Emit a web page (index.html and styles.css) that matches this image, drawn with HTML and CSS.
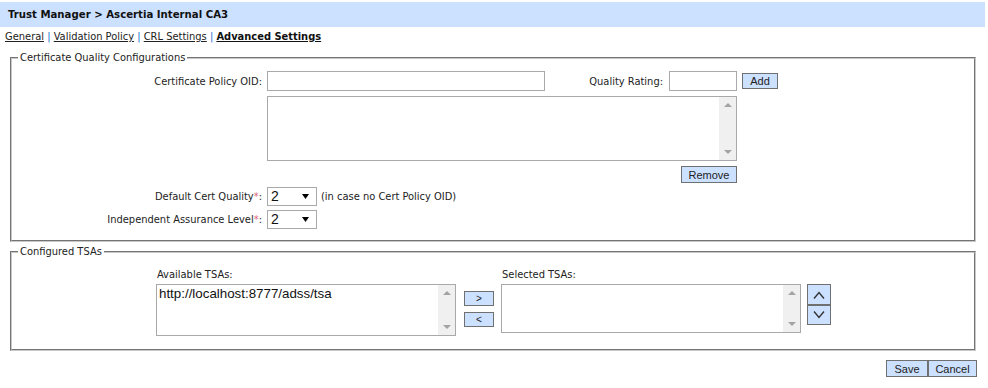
FILE: index.html
```html
<!DOCTYPE html>
<html>
<head>
<meta charset="utf-8">
<link rel="stylesheet" href="styles.css">
</head>
<body>
<div class="header">Trust Manager &gt; Ascertia Internal CA3</div>
<div class="tabs">
  <a class="tab" href="#">General</a> <span class="sep">|</span>
  <a class="tab" href="#">Validation Policy</a> <span class="sep">|</span>
  <a class="tab" href="#">CRL Settings</a> <span class="sep">|</span>
  <a class="tab current" href="#">Advanced Settings</a>
</div>

<fieldset class="box cq">
  <legend>Certificate Quality Configurations</legend>
  <div class="form">
    <label class="lbl">Certificate Policy OID:</label>
    <div class="row1">
      <input class="txt oid" type="text">
      <span class="qlbl">Quality Rating:</span>
      <input class="txt qr" type="text">
      <button class="btn add">Add</button>
    </div>

    <span></span>
    <div class="list oidlist">
      <div class="list-body"></div>
      <div class="sbar"><span class="arr up"></span><span class="arr down"></span></div>
    </div>

    <span></span>
    <div class="remove-row"><button class="btn remove">Remove</button></div>

    <label class="lbl">Default Cert Quality<span class="req">*</span>:</label>
    <div class="selrow">
      <span class="sel"><span class="sv">2</span><svg class="tri" width="9" height="7" viewBox="0 0 9 7"><path d="M1 1h7l-3.5 5z" fill="#000"/></svg></span>
      <span class="note">(in case no Cert Policy OID)</span>
    </div>

    <label class="lbl">Independent Assurance Level<span class="req">*</span>:</label>
    <div class="selrow">
      <span class="sel"><span class="sv">2</span><svg class="tri" width="9" height="7" viewBox="0 0 9 7"><path d="M1 1h7l-3.5 5z" fill="#000"/></svg></span>
    </div>
  </div>
</fieldset>

<fieldset class="box tsa">
  <legend>Configured TSAs</legend>
  <div class="tsa-grid">
    <div class="col">
      <div class="clbl">Available TSAs:</div>
      <div class="list avail">
        <div class="list-body"><div class="item">http://localhost:8777/adss/tsa</div></div>
        <div class="sbar"><span class="arr up"></span><span class="arr down"></span></div>
      </div>
    </div>
    <div class="mover">
      <button class="btn mv">&gt;</button>
      <button class="btn mv">&lt;</button>
    </div>
    <div class="col">
      <div class="clbl">Selected TSAs:</div>
      <div class="list selected">
        <div class="list-body"></div>
        <div class="sbar"><span class="arr up"></span><span class="arr down"></span></div>
      </div>
    </div>
    <div class="order">
      <button class="btn ord"><svg width="12" height="8" viewBox="0 0 12 8"><path d="M1 7.5L6 1.5l5 6" fill="none" stroke="#333" stroke-width="1.4"/></svg></button>
      <button class="btn ord"><svg width="12" height="8" viewBox="0 0 12 8"><path d="M1 0.5L6 6.5l5-6" fill="none" stroke="#333" stroke-width="1.4"/></svg></button>
    </div>
  </div>
</fieldset>

<div class="actions">
  <button class="btn act">Save</button><button class="btn act">Cancel</button>
</div>
</body>
</html>
```
FILE: styles.css
```css
body {
  margin: 0;
  font-family: "DejaVu Sans Condensed", "DejaVu Sans", sans-serif;
  font-stretch: condensed;
  font-size: 11px;
  color: #222;
  background: #fff;
}
.header {
  margin-top: 2px;
  width: 977px;
  height: 25px;
  line-height: 25px;
  padding-left: 8px;
  background: #cce0ff;
  font-weight: bold;
  font-size: 11.3px;
  color: #111;
}
.tabs {
  padding: 3px 5px 0;
  height: 16px;
  font-size: 11px;
}
.tab { color: #222; text-decoration: underline; }
.tab.current { font-weight: bold; color: #111; }
.sep { color: #1a6fd0; }

.box {
  margin: 0 12px 0 10px;
  padding: 0;
  border: 2px groove #c8c8c8;
  min-width: 0;
}
.box legend {
  margin-left: 6px;
  padding: 0 2px;
  font-size: 11px;
  line-height: 13px;
  color: #222;
}
.cq { margin-top: 5px; }
.tsa { margin-top: 3px; }

.form {
  display: grid;
  grid-template-columns: 250px 1fr;
  column-gap: 5px;
  row-gap: 4px;
  align-items: center;
  padding: 7px 0 11px;
}
.lbl { text-align: right; }
.row1 { display: flex; align-items: center; height: 20px; }
.txt {
  box-sizing: border-box;
  height: 20px;
  border: 1px solid #a9a9a9;
  padding: 0 2px;
  margin: 0;
}
.oid { width: 278px; }
.qlbl { width: 118px; text-align: right; margin-right: 6px; }
.qr { width: 68px; }
.btn {
  box-sizing: border-box;
  margin: 0;
  padding: 0;
  background: #cce0ff;
  border: 1px solid #707070;
  font-family: "Liberation Sans", Arial, sans-serif;
  font-size: 11px;
  color: #222;
  cursor: pointer;
}
.add { margin-left: 5px; width: 36px; height: 16px; }

.list {
  box-sizing: border-box;
  display: flex;
  border: 1px solid #a9a9a9;
  background: #fff;
}
.list-body { flex: 1; }
.sbar {
  width: 17px;
  background: #f0f0f0;
  display: flex;
  flex-direction: column;
  justify-content: space-between;
  align-items: center;
  padding: 6px 0;
}
.arr { width: 0; height: 0; border-left: 4px solid transparent; border-right: 4px solid transparent; }
.arr.up { border-bottom: 4px solid #a3a3a3; }
.arr.down { border-top: 4px solid #a3a3a3; }

.oidlist { width: 470px; height: 65px; margin-top: 1px; }
.remove-row { width: 470px; display: flex; justify-content: flex-end; margin-top: 1px; }
.remove { width: 56px; height: 17px; }

.selrow { display: flex; align-items: center; height: 19px; }
.sel {
  box-sizing: border-box;
  position: relative;
  width: 50px;
  height: 19px;
  border: 1px solid #a9a9a9;
  display: inline-block;
  font-family: "Liberation Sans", Arial, sans-serif;
  font-size: 14px;
  line-height: 17px;
  padding-left: 3px;
  color: #111;
}
.tri { position: absolute; right: 6px; top: 5px; }
.note { margin-left: 4px; }
.req { color: #e0607a; }

.tsa-grid {
  display: flex;
  align-items: flex-start;
  padding: 10px 0 13px 144px;
}
.clbl { height: 13px; line-height: 13px; margin-bottom: 3px; padding-left: 1px; }
.avail { width: 300px; height: 52px; margin-top: 1px; }
.selected { width: 300px; height: 49px; }
.item {
  font-family: "Liberation Sans", Arial, sans-serif;
  font-size: 13.33px;
  color: #111;
  padding: 1px 2px;
}
.mover {
  display: flex;
  flex-direction: column;
  gap: 6px;
  margin: 23px 7px 0 8px;
}
.mv { width: 30px; height: 15px; font-size: 10px; line-height: 12px; }
.order {
  display: flex;
  flex-direction: column;
  margin: 16px 0 0 6px;
}
.ord { width: 24px; height: 21px; display: flex; align-items: center; justify-content: center; }
.ord + .ord { height: 20px; }

.actions {
  display: flex;
  justify-content: flex-end;
  margin: 9px 11px 0 0;
}
.act { height: 17px; }
.act:first-child { width: 42px; }
.act:last-child { width: 49px; }
```
